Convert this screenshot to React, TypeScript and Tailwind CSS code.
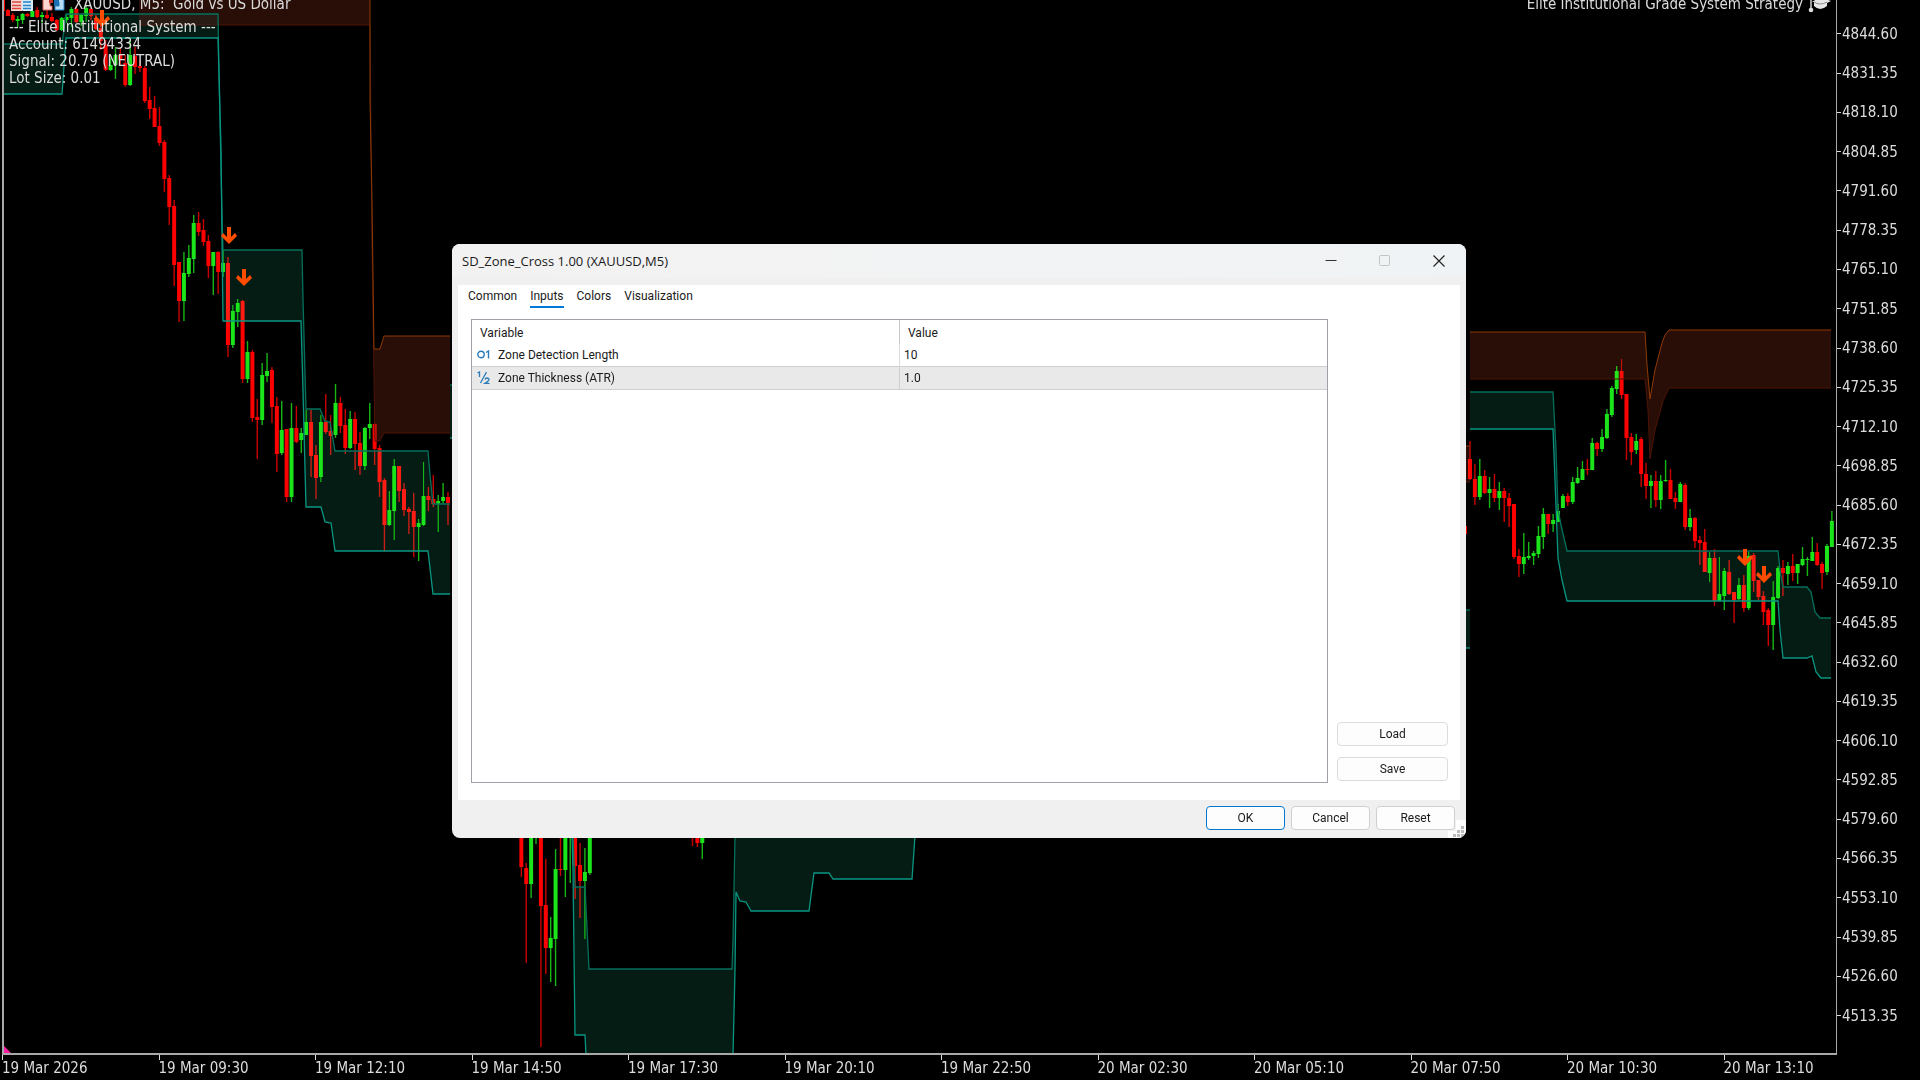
import { useState } from "react";

/* Candle: [bar index, high, body top, body bottom, low, rising] */
type Candle = [number, number, number, number, number, 0 | 1];

const candles: Candle[] = [
  [0, 0, 0, 11, 12, 0], [1, 9, 10, 16, 16, 0], [2, 13, 15, 20, 22, 0], [3, 16, 19, 21, 27, 1], [4, 13, 14, 20, 24, 1],
  [5, 13, 14, 16, 17, 0], [6, 10, 11, 17, 17, 1], [7, 7, 10, 17, 18, 0], [8, 12, 15, 17, 23, 1],
  [9, 10, 15, 18, 19, 0], [10, 13, 17, 21, 22, 0], [11, 19, 20, 30, 31, 0], [12, 17, 18, 30, 31, 1],
  [13, 14, 17, 20, 23, 1], [14, 7, 9, 18, 27, 1], [15, 6, 9, 22, 23, 0], [16, 14, 15, 22, 26, 1],
  [17, 6, 8, 16, 22, 1], [18, 8, 9, 16, 20, 0], [19, 14, 18, 29, 30, 0], [20, 20, 28, 41, 50, 0],
  [21, 40, 45, 70, 71, 0], [22, 58, 65, 70, 71, 1], [23, 47, 55, 65, 79, 1], [24, 47, 55, 60, 65, 0],
  [25, 55, 63, 85, 87, 0], [26, 40, 55, 85, 86, 1], [27, 47, 56, 67, 74, 0], [28, 60, 66, 68, 72, 0],
  [29, 66, 68, 101, 103, 0], [30, 87, 100, 109, 119, 0], [31, 96, 108, 127, 127, 0], [32, 107, 126, 143, 146, 0],
  [33, 140, 142, 179, 192, 0], [34, 175, 178, 207, 225, 0], [35, 200, 206, 265, 286, 0], [36, 262, 262, 301, 322, 0],
  [37, 252, 273, 301, 321, 1], [38, 245, 258, 274, 277, 1], [39, 215, 223, 259, 273, 1], [40, 212, 223, 232, 236, 0],
  [41, 219, 230, 242, 246, 0], [42, 235, 241, 266, 278, 0], [43, 252, 252, 266, 295, 1], [44, 251, 252, 272, 294, 0],
  [45, 250, 263, 272, 277, 1], [46, 257, 263, 345, 357, 0], [47, 305, 311, 345, 348, 1], [48, 299, 303, 312, 327, 1],
  [49, 300, 301, 379, 383, 0], [50, 341, 352, 379, 383, 1], [51, 350, 352, 418, 422, 0], [52, 399, 417, 420, 459, 0],
  [53, 363, 375, 420, 425, 1], [54, 353, 371, 376, 382, 1], [55, 367, 370, 407, 423, 0], [56, 397, 406, 454, 472, 0],
  [57, 401, 430, 453, 455, 1], [58, 429, 429, 497, 502, 0], [59, 403, 428, 497, 502, 1], [60, 406, 428, 442, 443, 0],
  [61, 428, 433, 440, 453, 1], [62, 410, 422, 435, 435, 1], [63, 410, 422, 456, 477, 0], [64, 445, 455, 478, 499, 0],
  [65, 415, 422, 477, 482, 1], [66, 394, 422, 432, 434, 0], [67, 415, 431, 436, 455, 0], [68, 384, 403, 435, 438, 1],
  [69, 397, 403, 426, 433, 0], [70, 409, 425, 448, 454, 0], [71, 411, 419, 448, 449, 1], [72, 412, 419, 444, 470, 0],
  [73, 432, 443, 466, 475, 0], [74, 427, 428, 466, 470, 1], [75, 403, 424, 428, 439, 1], [76, 423, 424, 449, 465, 0],
  [77, 445, 448, 482, 497, 0], [78, 478, 480, 525, 551, 0], [79, 491, 510, 525, 526, 1], [80, 459, 466, 511, 540, 1],
  [81, 466, 466, 491, 502, 0], [82, 483, 489, 510, 516, 0], [83, 507, 509, 512, 534, 0], [84, 493, 511, 527, 557, 0],
  [85, 519, 523, 527, 561, 1], [86, 462, 496, 525, 526, 1], [87, 487, 496, 500, 511, 0], [88, 475, 499, 504, 507, 0],
  [89, 495, 501, 504, 532, 1], [90, 483, 497, 501, 504, 1], [91, 492, 497, 503, 525, 0],
  [106, 800, 800, 867, 877, 0], [107, 863, 868, 884, 963, 0], [108, 800, 800, 884, 898, 1], [109, 800, 800, 801, 844, 1],
  [110, 800, 800, 906, 1047, 0], [111, 859, 905, 948, 974, 0], [112, 917, 938, 948, 982, 1], [113, 849, 869, 939, 986, 1],
  [114, 800, 869, 870, 876, 0], [115, 800, 800, 870, 897, 1], [116, 800, 800, 801, 883, 1], [117, 800, 800, 866, 899, 0],
  [118, 843, 865, 881, 918, 0], [119, 848, 872, 881, 939, 1], [120, 800, 800, 873, 875, 1],
  [141, 800, 800, 801, 846, 0], [142, 800, 800, 843, 847, 0], [143, 800, 800, 843, 859, 1],
  [299, 521, 526, 534, 545, 0],
  [300, 441, 459, 479, 480, 0], [301, 464, 479, 497, 505, 0], [302, 459, 476, 497, 500, 1], [303, 470, 476, 493, 494, 0],
  [304, 477, 489, 493, 508, 1], [305, 474, 489, 498, 502, 0], [306, 482, 491, 498, 510, 1], [307, 488, 491, 498, 522, 0],
  [308, 493, 498, 506, 527, 0], [309, 504, 504, 557, 559, 0], [310, 549, 556, 564, 577, 0], [311, 533, 557, 564, 574, 1],
  [312, 542, 556, 558, 560, 1], [313, 551, 553, 556, 565, 1], [314, 526, 536, 554, 558, 1], [315, 508, 514, 537, 549, 1],
  [316, 514, 514, 524, 534, 0], [317, 514, 520, 524, 532, 1], [318, 504, 511, 522, 522, 1], [319, 494, 496, 508, 508, 1],
  [320, 493, 496, 502, 506, 0], [321, 477, 482, 502, 504, 1], [322, 467, 478, 483, 484, 1], [323, 461, 469, 480, 480, 1],
  [324, 459, 469, 470, 475, 0], [325, 438, 443, 470, 470, 1], [326, 442, 443, 449, 456, 0], [327, 429, 437, 449, 452, 1],
  [328, 409, 414, 438, 439, 1], [329, 386, 388, 415, 417, 1], [330, 366, 371, 389, 394, 1], [331, 359, 371, 395, 399, 0],
  [332, 394, 394, 438, 460, 0], [333, 433, 437, 452, 465, 0], [334, 434, 441, 450, 454, 1], [335, 437, 439, 474, 487, 0],
  [336, 463, 474, 486, 499, 0], [337, 475, 481, 486, 508, 1], [338, 471, 481, 500, 507, 0], [339, 475, 481, 500, 509, 1],
  [340, 460, 480, 481, 482, 1], [341, 469, 480, 499, 499, 0], [342, 492, 498, 502, 509, 0], [343, 482, 484, 502, 502, 1],
  [344, 483, 485, 527, 530, 0], [345, 509, 518, 527, 531, 1], [346, 517, 518, 541, 548, 0], [347, 536, 540, 543, 565, 0],
  [348, 529, 542, 572, 572, 0], [349, 552, 558, 573, 582, 1], [350, 549, 558, 601, 606, 0], [351, 557, 594, 601, 601, 1],
  [352, 568, 571, 596, 610, 1], [353, 560, 572, 594, 595, 0], [354, 592, 592, 600, 623, 0], [355, 578, 585, 599, 600, 1],
  [356, 575, 585, 608, 612, 0], [357, 552, 556, 608, 610, 1], [358, 553, 555, 581, 592, 0], [359, 580, 580, 597, 600, 0],
  [360, 591, 596, 612, 625, 0], [361, 608, 610, 625, 646, 0], [362, 581, 597, 625, 650, 1], [363, 566, 568, 598, 599, 1],
  [364, 560, 568, 573, 596, 0], [365, 562, 566, 574, 585, 1], [366, 554, 566, 573, 581, 0], [367, 564, 564, 573, 584, 1],
  [368, 547, 559, 565, 566, 1], [369, 557, 559, 560, 576, 1], [370, 537, 552, 561, 561, 1], [371, 543, 552, 565, 566, 0],
  [372, 562, 564, 573, 589, 0], [373, 544, 546, 572, 575, 1], [374, 511, 521, 547, 547, 1],
];

/* Each zone is bounded by an outer (top) and an inner (bottom) line */
const demandZones = [
  {
    top: "3,44 62,44 66,14 218,14 219,75 222,215 223,250 302,250 303,300 306,409 320,409 325,421 330,422 335,451 428,451 430,475 433,504 450,504",
    bottom: "3,94 62,94 66,38 218,38 219,73 221,150 223,321 301,321 303,391 306,507 321,507 325,522 331,523 335,551 428,551 433,594 450,594",
  },
  {
    top: "573,836 575,887 585,887 589,969 732,969 733,940 735,836",
    bottom: "572,836 573,870 575,1035 585,1035 586,1055 733,1055 735,970 736,892 740,901 746,902 751,911 809,911 814,873 829,873 833,879 912,879 915,836",
  },
  {
    top: "1470,392 1553,392 1556,450 1558,510 1561,525 1567,551 1778,551 1780,570 1783,587 1807,587 1811,592 1815,612 1820,618 1831,618",
    bottom: "1470,429 1553,429 1555,480 1558,558 1562,580 1567,601 1778,601 1780,630 1783,658 1807,658 1812,656 1816,672 1821,678 1831,678",
  },
  { top: "1464,610 1470,610", bottom: "1464,648 1470,648" },
  { top: "450,385 454,385", bottom: "450,438 454,438" },
];

const supplyZones = [
  {
    top: "139,-2 370,-2 370,100 372,200 374,349 380,349 384,336 450,336",
    bottom: "139,25 370,25 372,250 375,441 380,441 384,433 450,433",
  },
  {
    top: "1470,332 1645,332 1647,365 1650,399 1655,370 1662,343 1665,335 1669,330 1831,330",
    bottom: "1470,379 1645,379 1648,410 1650,459 1655,430 1663,401 1669,388 1831,388",
  },
  { top: "1464,446 1470,446", bottom: "1464,482 1470,482" },
];

const signals = [
  [102, 10],
  [229, 227],
  [244, 269],
  [1745, 549],
  [1764, 566],
];

const prices = Array.from({ length: 27 }, (_, i) => (4857.85 - i * 13.25).toFixed(2));

const times = [
  "19 Mar 2026",
  "19 Mar 09:30",
  "19 Mar 12:10",
  "19 Mar 14:50",
  "19 Mar 17:30",
  "19 Mar 20:10",
  "19 Mar 22:50",
  "20 Mar 02:30",
  "20 Mar 05:10",
  "20 Mar 07:50",
  "20 Mar 10:30",
  "20 Mar 13:10",
];

const tabs = ["Common", "Inputs", "Colors", "Visualization"];

const barX = (i: number) => 3 + i * 4.89;

function zoneShape(top: string, bottom: string) {
  return `${top} ${bottom.split(" ").reverse().join(" ")}`;
}

function PriceChart() {
  return (
    <svg
      aria-label="XAUUSD M5 candlestick chart"
      role="img"
      viewBox="4 0 1832 1053"
      preserveAspectRatio="xMinYMin slice"
      className="absolute inset-0 w-full h-full"
    >
      {candles.map(([i, high, top, bottom, low, up]) => (
        <g key={i} fill={up ? "#1be41b" : "#fd0000"}>
          <rect x={barX(i) - 0.7} y={high} width="1.4" height={low - high} fillOpacity="0.8" />
          <rect x={barX(i) - 2} y={top} width="4" height={Math.max(bottom - top, 1)} />
        </g>
      ))}

      {/* Zone fills, tinted over the candles */}
      {supplyZones.map((z) => (
        <g key={z.top} fill="none">
          <polygon points={zoneShape(z.top, z.bottom)} fill="#280e06" className="mix-blend-lighten" />
          <polyline points={z.bottom} stroke="#4f1406" />
          <polyline points={z.top} stroke="#8f3a04" />
        </g>
      ))}
      {demandZones.map((z) => (
        <g key={z.top} fill="none">
          <polygon points={zoneShape(z.top, z.bottom)} fill="#051c14" className="mix-blend-lighten" />
          <polyline points={z.top} stroke="#04705c" strokeWidth="1.3" />
          <polyline points={z.bottom} stroke="#089683" strokeWidth="1.3" />
        </g>
      ))}

      {signals.map(([x, y]) => (
        <path
          key={x}
          d={`M${x - 2} ${y}h4v10l4 -4l2 3l-8 8l-8 -8l2 -3l4 4z`}
          fill="#ff4c00"
        />
      ))}

      <path d="M4 1046L11 1053H4Z" fill="#ff1fa0" />
    </svg>
  );
}

function ChartHeader() {
  return (
    <div className="relative flex justify-between -mt-[6px] px-[5px] leading-5">
      <div className="flex gap-[9px]">
        <svg width="22" height="18" viewBox="0 0 22 18" aria-hidden="true" className="ml-[2px]">
          <rect width="11" height="17" fill="#f6d5d0" />
          <rect x="11" width="11" height="17" rx="1" fill="#d5ebfa" />
          <path d="M1 8h9M1 11.500h9M1 14.500h9" stroke="#d8493e" strokeWidth="1.4" />
          <path d="M12 8h8M12 11.500h8M12 14.500h8" stroke="#2a84c6" strokeWidth="1.4" />
        </svg>
        <svg width="23" height="18" viewBox="0 0 23 18" aria-hidden="true">
          <path d="M1 5h9v3h-2v4h2v4H1z" fill="#fbd7d3" stroke="#d8655c" />
          <path d="M13 5h9v11h-9v-4h4V8h-4z" fill="#b6dcf8" stroke="#2a84c6" />
          <path d="M12 5h5v7h-5z" fill="#1b6fb2" />
          <path d="M7 5h4v4H7z" fill="#c5352b" />
        </svg>
        <h1 className="whitespace-pre">XAUUSD, M5:  Gold vs US Dollar</h1>
      </div>
      <div className="flex gap-[5px]">
        <span>Elite Institutional Grade System Strategy</span>
        <svg width="23" height="20" viewBox="0 0 23 20" aria-hidden="true">
          <path d="M3 6v9" stroke="#dcdcdc" strokeWidth="1.4" />
          <circle cx="3" cy="16" r="2.300" fill="#dcdcdc" />
          <path d="M4 8L12 3L23 7L19 9V12Q12 18 6 12V8Z" fill="#e6e6e6" />
          <path d="M6 8Q12 12 19 8" fill="none" stroke="#8a8a8a" />
        </svg>
      </div>
    </div>
  );
}

function ZoneDialog() {
  const [tab, setTab] = useState("Inputs");
  const button =
    "h-6 rounded-[4px] border bg-[#fdfdfd] text-center hover:bg-[#e5f1fb]";

  return (
    <div
      role="dialog"
      aria-labelledby="dialog-title"
      className="relative flex flex-col w-[1014px] h-[594px] rounded-lg overflow-hidden bg-[#f0f0f0] font-[Roboto,'DejaVu_Sans',sans-serif] text-[12px] leading-4 text-[#1a1a1a]"
    >
      {/* Title bar */}
      <div className="flex items-center justify-between h-[33px] shrink-0 pl-[10px] bg-linear-to-r from-[#f3f2f2] to-[#f0f3f5]">
        <h2 id="dialog-title" className="font-['Open_Sans','Noto_Sans',sans-serif] text-[13px]">
          SD_Zone_Cross 1.00 (XAUUSD,M5)
        </h2>
        <div className="flex">
          <button type="button" aria-label="Minimize" className="flex items-center justify-center w-[54px] h-[33px]">
            <svg width="12" height="12" viewBox="0 0 12 12" aria-hidden="true">
              <path d="M0.500 5.500h11" stroke="#333" />
            </svg>
          </button>
          <button type="button" aria-label="Maximize" disabled className="flex items-center justify-center w-[54px] h-[33px]">
            <svg width="12" height="12" viewBox="0 0 12 12" fill="none" aria-hidden="true">
              <rect x="0.500" y="0.500" width="10" height="10" rx="1" stroke="#c3c6c6" />
            </svg>
          </button>
          <button type="button" aria-label="Close" className="flex items-center justify-center w-[54px] h-[33px]">
            <svg width="12" height="12" viewBox="0 0 12 12" aria-hidden="true">
              <path d="M0.500 0.500L11.500 11.500M11.500 0.500L0.500 11.500" stroke="#222" strokeWidth="1.200" />
            </svg>
          </button>
        </div>
      </div>

      {/* Tab page */}
      <div className="flex flex-col flex-1 mt-2 mx-[6px] bg-white">
        <div role="tablist" className="flex gap-[13px] pt-[3px] pl-[10px]">
          {tabs.map((name) => (
            <button
              key={name}
              type="button"
              role="tab"
              aria-selected={tab === name}
              onClick={() => setTab(name)}
              className={
                tab === name
                  ? "pb-[2px] border-b-2 border-[#0078d7]"
                  : "pb-[2px] border-b-2 border-transparent"
              }
            >
              {name}
            </button>
          ))}
        </div>

        <div className="flex flex-1 mt-[11px] mb-[17px] pl-[13px]">
          <div className="flex-1 border border-[#a0a0a8]">
            <table className="w-full table-fixed border-collapse">
              <thead>
                <tr className="h-6 text-left">
                  <th scope="col" className="w-1/2 pt-[2px] pl-2 font-normal">Variable</th>
                  <th scope="col" className="pt-[2px] pl-2 font-normal border-l border-[#c8c8c8]">Value</th>
                </tr>
              </thead>
              <tbody>
                <tr className="h-[22px]">
                  <td className="pl-[5px]">
                    <span className="flex items-center gap-2">
                      <svg width="13" height="10" viewBox="0 0 13 10" fill="none" stroke="#2a7ab8" strokeWidth="1.400" aria-hidden="true">
                        <circle cx="4" cy="4.500" r="3.200" />
                        <path d="M9 2.500L11.500 1V8.500" />
                      </svg>
                      Zone Detection Length
                    </span>
                  </td>
                  <td className="pl-1 border-l border-[#dcdcdc]">10</td>
                </tr>
                <tr className="h-[23px] bg-[#e9e9e9] border-y border-[#cfcfcf]">
                  <td className="pl-[5px]">
                    <span className="flex items-center gap-2">
                      <svg width="13" height="14" viewBox="0 0 13 14" fill="none" stroke="#2a7ab8" strokeWidth="1.300" aria-hidden="true">
                        <path d="M0.500 2L2.500 1V6M9.500 1L3.500 12M8 8.500Q8.500 7 10.200 7Q12 7.200 12 8.600Q11.800 9.800 8 12.400H12.500" />
                      </svg>
                      Zone Thickness (ATR)
                    </span>
                  </td>
                  <td className="pl-1 border-l border-[#cfcfcf]">1.0</td>
                </tr>
              </tbody>
            </table>
          </div>
          <div className="flex flex-col justify-end gap-[11px] w-[132px] pl-[9px] pr-3 pb-[2px]">
            <button type="button" className={`${button} border-[#dcdcdc]`}>Load</button>
            <button type="button" className={`${button} border-[#dcdcdc]`}>Save</button>
          </div>
        </div>
      </div>

      {/* Footer */}
      <div className="flex justify-end gap-[6px] h-[38px] shrink-0 pt-[6px] pr-[11px]">
        <button type="button" className={`${button} w-[79px] border-[#0078d4]`}>OK</button>
        <button type="button" className={`${button} w-[79px] border-[#d0d0d0]`}>Cancel</button>
        <button type="button" className={`${button} w-[79px] border-[#d0d0d0]`}>Reset</button>
      </div>

      <svg width="18" height="18" viewBox="0 0 18 18" aria-hidden="true" className="absolute right-0 bottom-0">
        <path d="M8 0H18V18H0V11H8Z" fill="#fff" />
        <path d="M13 6h3v3h-3zM13 10h3v3h-3zM13 14h3v3h-3zM9 10h3v3h-3zM9 14h3v3h-3zM5 14h3v3h-3z" fill="#bdbdbd" />
      </svg>
    </div>
  );
}

export default function App() {
  return (
    <main className="relative h-screen overflow-hidden bg-black font-['DejaVu_Sans_Condensed','DejaVu_Sans',sans-serif] text-[15px] text-[#dcdcdc]">
      <div className="grid h-full grid-cols-[1fr_83px] grid-rows-[1fr_25px]">
        {/* Chart */}
        <section className="relative ml-[2px] overflow-hidden border-l-2 border-r border-b-2 border-[#a8a8a8]">
          <PriceChart />
          <ChartHeader />
          <div className="relative mt-[5px] pl-[5px] leading-[17px]">
            <p>--- Elite Institutional System ---</p>
            <p>Account: 61494334</p>
            <p>Signal: 20.79 (NEUTRAL)</p>
            <p>Lot Size: 0.01</p>
          </div>
        </section>

        {/* Price axis */}
        <ol className="flex flex-col min-h-0 -mt-[25px] mb-[20px] leading-4">
          {prices.map((price) => (
            <li key={price} className="flex flex-1 items-center gap-px min-h-0">
              <span className="w-1 h-px bg-[#dcdcdc]" />
              {price}
            </li>
          ))}
        </ol>

        {/* Time axis */}
        <ol className="col-span-2 grid grid-cols-12 ml-[2px] mr-[40px] leading-5">
          {times.map((time) => (
            <li key={time} className="relative pt-[3px] whitespace-nowrap">
              <span className="absolute left-0 top-0 w-px h-[5px] bg-[#dcdcdc]" />
              {time}
            </li>
          ))}
        </ol>
      </div>

      <div className="absolute inset-0 flex items-center justify-center pt-[2px] pr-[2px]">
        <ZoneDialog />
      </div>
    </main>
  );
}
